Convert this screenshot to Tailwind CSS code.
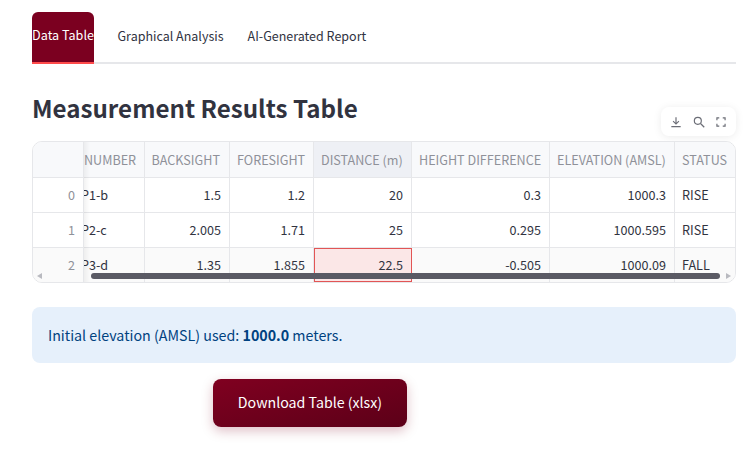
<!DOCTYPE html>
<html lang="en">
    <head>
        <meta charset="UTF-8">
        <meta name="viewport" content="width=device-width, initial-scale=1.0">
        <title>Measurement Results</title>
        <script src="https://cdn.jsdelivr.net/npm/@tailwindcss/browser@4"></script>
    </head>
    <body class="bg-white text-[#31333f] font-['Noto_Sans_CJK_SC','Source_Sans_Pro',sans-serif] overflow-hidden">
        <div class="w-[756px] h-[449px] pl-8 pr-5 pt-3">

            <!-- tabs -->
            <div class="flex gap-6 h-[52px] border-b-2 border-[#e6e7ea]">
                <div class="h-[52px] w-[62px] pb-[4px] flex items-center justify-center rounded-t-md bg-[#7b0020] border-b-2 border-[#ff4b4b] text-white text-[12.6px] whitespace-nowrap">Data Table</div>
                <div class="h-[50px] pb-[2px] -ml-[0.5px] flex items-center text-[12.5px] whitespace-nowrap">Graphical Analysis</div>
                <div class="h-[50px] pb-[2px] flex items-center text-[12.5px] whitespace-nowrap">AI-Generated Report</div>
            </div>

            <h2 class="mt-[25px] h-[38px] leading-[38px] text-[24.15px] font-semibold">Measurement Results Table</h2>

            <!-- dataframe -->
            <div class="relative mt-[14px]">
                <div class="absolute right-0 -top-[34px] w-[75px] h-[29px] bg-white rounded-lg shadow-[0_1px_8px_rgba(0,0,0,0.08)] flex items-center justify-center gap-[8.5px] text-[#6b6d76]">
                    <svg class="w-[14px] h-[14px]" viewBox="0 0 24 24" fill="none" stroke="currentColor" stroke-width="2"><path d="M12 4v11M7 10.5l5 5 5-5M4 20h16"/></svg>
                    <svg class="w-[14px] h-[14px]" viewBox="0 0 24 24" fill="none" stroke="currentColor" stroke-width="2"><circle cx="10" cy="10" r="6"/><path d="M15 15l6 6"/></svg>
                    <svg class="w-[14px] h-[14px]" viewBox="0 0 24 24" fill="none" stroke="currentColor" stroke-width="2"><path d="M5 9V5h4M15 5h4v4M19 15v4h-4M9 19H5v-4"/></svg>
                </div>

                <div class="relative h-[142px] border border-[#e6e7ea] rounded-[10px] overflow-hidden text-[12.6px] leading-5">
                    <div class="grid grid-cols-[51px_60.5px_85.5px_84px_98px_138px_125px_61px] grid-rows-[36px_35px_35px_34px]">
                        <div class="bg-[#f8f9fb] border-b border-r border-[#e6e7ea]"></div>
                        <div class="bg-[#f8f9fb] border-b border-r border-[#e6e7ea] text-[#8f9199] flex items-center overflow-hidden">NUMBER</div>
                        <div class="bg-[#f8f9fb] border-b border-r border-[#e6e7ea] text-[#8f9199] flex items-center pl-[7px] pr-2">BACKSIGHT</div>
                        <div class="bg-[#f8f9fb] border-b border-r border-[#e6e7ea] text-[#8f9199] flex items-center pl-[7px] pr-2">FORESIGHT</div>
                        <div class="bg-[#eef0f5] border-b border-r border-[#e6e7ea] text-[#8f9199] flex items-center pl-[7px] pr-2 whitespace-nowrap">DISTANCE (m)</div>
                        <div class="bg-[#f8f9fb] border-b border-r border-[#e6e7ea] text-[#8f9199] flex items-center pl-[7px] pr-2 whitespace-nowrap">HEIGHT DIFFERENCE</div>
                        <div class="bg-[#f8f9fb] border-b border-r border-[#e6e7ea] text-[#8f9199] flex items-center pl-[7px] pr-2 whitespace-nowrap">ELEVATION (AMSL)</div>
                        <div class="bg-[#f8f9fb] border-b border-[#e6e7ea] text-[#8f9199] flex items-center pl-[7px] pr-2">STATUS</div>

                        <div class="border-b border-r border-[#e6e7ea] text-[#8f9199] flex items-center justify-end px-2">0</div>
                        <div class="border-b border-r border-[#e6e7ea] flex items-center overflow-hidden"><span class="-ml-[3px]">P1-b</span></div>
                        <div class="border-b border-r border-[#e6e7ea] flex items-center justify-end px-2">1.5</div>
                        <div class="border-b border-r border-[#e6e7ea] flex items-center justify-end px-2">1.2</div>
                        <div class="border-b border-r border-[#e6e7ea] flex items-center justify-end px-2">20</div>
                        <div class="border-b border-r border-[#e6e7ea] flex items-center justify-end px-2">0.3</div>
                        <div class="border-b border-r border-[#e6e7ea] flex items-center justify-end px-2">1000.3</div>
                        <div class="border-b border-[#e6e7ea] flex items-center pl-[7px] pr-2">RISE</div>

                        <div class="border-b border-r border-[#e6e7ea] text-[#8f9199] flex items-center justify-end px-2">1</div>
                        <div class="border-b border-r border-[#e6e7ea] flex items-center overflow-hidden"><span class="-ml-[3px]">P2-c</span></div>
                        <div class="border-b border-r border-[#e6e7ea] flex items-center justify-end px-2">2.005</div>
                        <div class="border-b border-r border-[#e6e7ea] flex items-center justify-end px-2">1.71</div>
                        <div class="border-b border-r border-[#e6e7ea] flex items-center justify-end px-2">25</div>
                        <div class="border-b border-r border-[#e6e7ea] flex items-center justify-end px-2">0.295</div>
                        <div class="border-b border-r border-[#e6e7ea] flex items-center justify-end px-2">1000.595</div>
                        <div class="border-b border-[#e6e7ea] flex items-center pl-[7px] pr-2">RISE</div>

                        <div class="bg-[#fafafa] border-r border-[#e6e7ea] text-[#8f9199] flex items-center justify-end px-2">2</div>
                        <div class="bg-[#fafafa] border-r border-[#e6e7ea] flex items-center overflow-hidden"><span class="-ml-[3px]">P3-d</span></div>
                        <div class="bg-[#fafafa] border-r border-[#e6e7ea] flex items-center justify-end px-2">1.35</div>
                        <div class="bg-[#fafafa] border-r border-[#e6e7ea] flex items-center justify-end px-2">1.855</div>
                        <div class="bg-[#fbe7e7] border border-[#e25555] flex items-center justify-end px-2">22.5</div>
                        <div class="bg-[#fafafa] border-r border-[#e6e7ea] flex items-center justify-end px-2">-0.505</div>
                        <div class="bg-[#fafafa] border-r border-[#e6e7ea] flex items-center justify-end px-2">1000.09</div>
                        <div class="bg-[#fafafa] flex items-center pl-[7px] pr-2">FALL</div>
                    </div>

                    <!-- frozen column shadow -->
                    <div class="absolute left-[51px] top-0 bottom-0 w-[6px] bg-gradient-to-r from-black/5 to-transparent"></div>

                    <!-- overlay scrollbar -->
                    <div class="absolute left-[4px] bottom-[3px] w-0 h-0 border-y-[3px] border-y-transparent border-r-[5px] border-r-[#b9bac0]"></div>
                    <div class="absolute left-[58px] right-[15px] bottom-[3px] h-[6px] rounded-full bg-[#5a5a64]"></div>
                    <div class="absolute right-[4px] bottom-[3px] w-0 h-0 border-y-[3px] border-y-transparent border-l-[5px] border-l-[#b9bac0]"></div>
                </div>
            </div>

            <div class="mt-6 h-14 px-4 flex items-center rounded-lg bg-[#e6f0fb] text-[#004280] text-[14.25px]">
                <p>Initial elevation (AMSL) used: <strong class="font-semibold">1000.0</strong> meters.</p>
            </div>

            <div class="mt-4 pl-[181px]">
                <button class="w-[194px] h-12 rounded-lg bg-gradient-to-br from-[#800020] to-[#5c0018] text-white text-[14.2px] shadow-[0_4px_12px_rgba(128,0,32,0.25)]">Download Table (xlsx)</button>
            </div>
        </div>
    </body>
</html>
